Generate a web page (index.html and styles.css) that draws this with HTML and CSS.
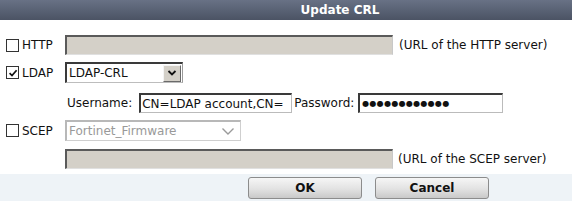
FILE: index.html
```html
<!DOCTYPE html>
<html>
<head>
<meta charset="utf-8">
<link rel="stylesheet" href="styles.css">
</head>
<body>
<div class="dialog">
  <div class="titlebar"><span class="title">Update CRL</span></div>
  <div class="form">
    <div class="row row-http">
      <label class="opt"><span class="cb"></span><span>HTTP</span></label>
      <div class="field field-disabled url"></div>
      <span class="hint">(URL of the HTTP server)</span>
    </div>
    <div class="row row-ldap">
      <label class="opt"><span class="cb"><svg viewBox="0 0 10 10" width="10" height="10"><path d="M1.6 5.2 L4 7.6 L8.6 2.2" fill="none" stroke="#111" stroke-width="1.7"/></svg></span><span>LDAP</span></label>
      <div class="select">
        <span class="select-text">LDAP-CRL</span>
        <span class="select-btn"><svg viewBox="0 0 10 8" width="10" height="8"><path d="M1.5 2 L5 5.5 L8.5 2" fill="none" stroke="#111" stroke-width="1.8"/></svg></span>
      </div>
    </div>
    <div class="row row-cred">
      <span class="cred-label">Username:</span>
      <div class="field field-white user">CN=LDAP account,CN=</div>
      <span class="cred-label pass-label">Password:</span>
      <div class="field field-white pass">●●●●●●●●●●●●</div>
    </div>
    <div class="row row-scep">
      <label class="opt"><span class="cb"></span><span>SCEP</span></label>
      <div class="select select-disabled">
        <span class="select-text">Fortinet_Firmware</span>
        <span class="select-chev"><svg viewBox="0 0 14 9" width="14" height="9"><path d="M1.5 1.5 L7 7 L12.5 1.5" fill="none" stroke="#9a9a9a" stroke-width="1.4"/></svg></span>
      </div>
    </div>
    <div class="row row-scepurl">
      <div class="field field-disabled url"></div>
      <span class="hint">(URL of the SCEP server)</span>
    </div>
  </div>
  <div class="footer">
    <button class="btn">OK</button>
    <button class="btn">Cancel</button>
  </div>
</div>
</body>
</html>
```
FILE: styles.css
```css
html, body {
  margin: 0;
  padding: 0;
  background: #ffffff;
}
body {
  font-family: "DejaVu Sans", Verdana, sans-serif;
  font-size: 12px;
  color: #111;
}
.dialog {
  width: 572px;
}
.titlebar {
  height: 20px;
  background: linear-gradient(#687185, #4b5364);
  display: flex;
  align-items: center;
  justify-content: center;
  padding-left: 108px;
}
.title {
  color: #ffffff;
  font-weight: bold;
  font-size: 12px;
}
.form {
  padding-top: 15px;
  padding-bottom: 5px;
}
.row {
  display: flex;
  align-items: center;
  padding-left: 6px;
}
.row-ldap { margin-top: 7px; }
.row-cred { margin-top: 10px; padding-left: 67px; }
.row-scep { margin-top: 7px; }
.row-scepurl { margin-top: 8px; padding-left: 65px; }
.opt {
  width: 59px;
  display: flex;
  align-items: center;
  gap: 3px;
}
.cb {
  width: 11px;
  height: 11px;
  border: 1px solid #333;
  background: #fff;
  display: flex;
  align-items: center;
  justify-content: center;
}
.field {
  box-sizing: border-box;
  height: 20px;
  border-style: solid;
  border-width: 2px 1px 1px 2px;
  border-color: #5a5a5a #c8c8c8 #e0e0e0 #5a5a5a;
}
.field-disabled {
  background: #d4d0c8;
}
.url {
  width: 328px;
}
.hint {
  margin-left: 6px;
}
.row-scepurl .hint { margin-left: 5px; }
.select {
  box-sizing: border-box;
  width: 118px;
  height: 21px;
  border-style: solid;
  border-width: 2px 1px 1px 2px;
  border-color: #3a3a3a #9a9a9a #bdbdbd #3a3a3a;
  background: #fff;
  display: flex;
  align-items: center;
  justify-content: space-between;
}
.select-text {
  padding-left: 2px;
}
.select-btn {
  width: 16px;
  height: 15px;
  margin-right: 1px;
  background: #d4d0c8;
  border: 1px solid;
  border-color: #f4f4f4 #6a6a6a #6a6a6a #f4f4f4;
  display: flex;
  align-items: center;
  justify-content: center;
}
.select-disabled {
  width: 176px;
  border: 1px solid #a8a8a8;
  border-top-width: 2px;
  border-left-width: 2px;
  border-color: #b8b8b8 #cfcfcf #cfcfcf #b8b8b8;
  color: #999;
}
.select-chev {
  margin-right: 5px;
  display: flex;
}
.field-white {
  background: #fff;
  border-color: #3a3a3a #bbbbbb #bbbbbb #3a3a3a;
  display: flex;
  align-items: center;
  padding-left: 1px;
  font-size: 12px;
}
.user {
  width: 153px;
  margin-left: 7px;
  white-space: nowrap;
  overflow: hidden;
}
.pass-label {
  margin-left: 2px;
}
.pass {
  width: 145px;
  margin-left: 4px;
  font-size: 8px;
  letter-spacing: 0.3px;
  padding-left: 2px;
}
.footer {
  height: 27px;
  background: #eef3f7;
  display: flex;
  align-items: center;
  gap: 13px;
  padding-left: 248px;
}
.btn {
  width: 114px;
  height: 22px;
  border: 1px solid #8c8c8c;
  border-radius: 3px;
  background: linear-gradient(#f6f6f6, #e2e2e2 55%, #c9c9c9);
  font-family: "DejaVu Sans", Verdana, sans-serif;
  font-weight: bold;
  font-size: 12px;
  color: #111;
  padding: 0;
}
```
